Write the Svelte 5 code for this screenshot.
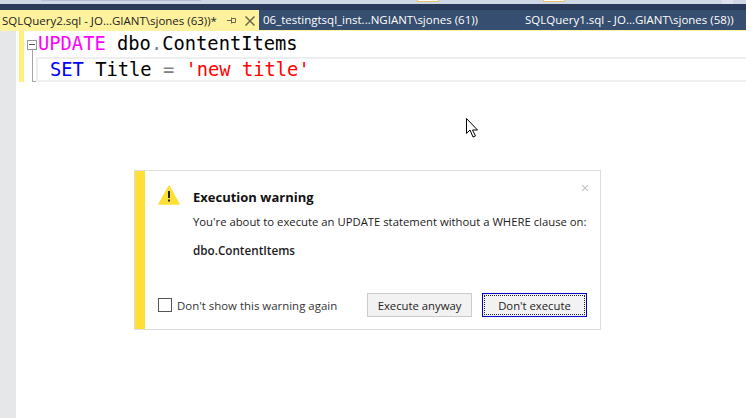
<script>
	let dontShow = $state(false);
	let tabs = [
		{ label: "SQLQuery2.sql - JO...GIANT\\sjones (63))*", active: true },
		{ label: "06_testingtsql_inst...NGIANT\\sjones (61))" },
		{ label: "SQLQuery1.sql - JO...GIANT\\sjones (58))" }
	];
</script>

<div class="ide">
	<div class="menu-strip">
		<span class="band"></span>
		<span class="chip one"></span>
		<span class="chip two"></span>
		<span class="end"></span>
	</div>
	<div class="tabs">
		{#each tabs as tab}
			<div class="tab" class:active={tab.active}>
				<span>{tab.label}</span>
				{#if tab.active}
					<svg class="pin" width="9" height="9" viewBox="0 0 9 9">
						<path d="M0 4.500h4M4.500 1.500v6M4.500 2.500h4v4h-4" fill="none" stroke="#6b6650" />
					</svg>
					<svg class="close" width="10" height="10" viewBox="0 0 10 10">
						<path d="M.5.500l9 9M9.500.500l-9 9" fill="none" stroke="#6b6650" stroke-width="1.500" />
					</svg>
				{/if}
			</div>
		{/each}
	</div>

	<div class="body">
		<div class="gutter"></div>
		<div class="doc">
			<div class="code">
				<div class="marks"></div>
				<div class="fold">
					<div class="fold-box"></div>
					<div class="fold-line"></div>
				</div>
				<div class="lines">
					<div class="line"><span class="pink">UPDATE</span> dbo<span class="grey">.</span>ContentItems</div>
					<div class="line current"><span class="blue">SET</span> Title <span class="grey">=</span> <span class="red">'new title'</span></div>
				</div>
			</div>

			<svg class="cursor" width="14" height="22" viewBox="0 0 14 22">
				<path d="M.5.500v15l3.500-3.500 3 7 2.500-1-3-6h5z" fill="#fff" stroke="#000" />
			</svg>

			<div class="dialog">
				<div class="stripe"></div>
				<div class="content">
					<button class="dismiss" aria-label="Dismiss">
						<svg width="6" height="6" viewBox="0 0 6 6">
							<path d="M0 0l6 6M6 0l-6 6" stroke="#c4c4c4" stroke-width="1.200" fill="none" />
						</svg>
					</button>
					<div class="head">
						<svg class="warn" width="22" height="20" viewBox="0 0 22 20">
							<path d="M11 1L21 19H1z" fill="#ffdf33" stroke="#ffdf33" stroke-linejoin="round" stroke-width="1.500" />
							<rect x="10" y="6" width="2" height="7" fill="#222" />
							<rect x="10" y="14.500" width="2" height="2" fill="#222" />
						</svg>
						<div class="text">
							<h1>Execution warning</h1>
							<p>You're about to execute an UPDATE statement without a WHERE clause on:</p>
							<p class="target">dbo.ContentItems</p>
						</div>
					</div>
					<div class="foot">
						<label class="check">
							<input type="checkbox" bind:checked={dontShow} />
							<span>Don't show this warning again</span>
						</label>
						<button class="btn">Execute anyway</button>
						<button class="btn primary"><span>Don't execute</span></button>
					</div>
				</div>
			</div>
		</div>
	</div>
</div>

<style>
	:global(body) {
		margin: 0;
		background: #fff;
	}
	.ide {
		width: 746px;
		height: 418px;
		overflow: hidden;
		display: flex;
		flex-direction: column;
		font-family: "Open Sans", "Noto Sans", sans-serif;
		background: #fff;
	}
	.menu-strip {
		height: 4px;
		background: #cfd6e5;
		position: relative;
		flex: none;
		border-bottom: 6px solid #2a3a59;
	}
	.band {
		position: absolute;
		top: 0;
		left: 41px;
		width: 160px;
		height: 1px;
		background: #b4bdd4;
	}
	.chip {
		position: absolute;
		top: 0;
		width: 20px;
		height: 1px;
		background: #fff;
		border: 1px solid #e5c365;
		border-top: 0;
	}
	.chip.one { left: 417px; }
	.chip.two { left: 543px; }
	.end {
		position: absolute;
		top: 0;
		left: 722px;
		width: 11px;
		height: 4px;
		background: #dde2ee;
	}
	.tabs {
		height: 20px;
		flex: none;
		display: flex;
		background: #364e6f;
		border-bottom: 1px solid #fff29d;
		color: #fff;
		font-size: 11.5px;
		line-height: 20px;
	}
	.tab {
		display: flex;
		align-items: center;
		white-space: nowrap;
		flex: none;
		box-sizing: border-box;
	}
	.tab:nth-child(1) {
		width: 259px;
		padding-left: 2px;
		background: #fff29d;
		color: #222;
		height: 21px;
	}
	.tab:nth-child(2) {
		width: 260px;
		padding-left: 4px;
	}
	.tab:nth-child(3) {
		padding-left: 6px;
	}
	.pin {
		margin-left: 10px;
	}
	.close {
		margin-left: 9px;
	}
	.body {
		flex: 1;
		display: flex;
		min-height: 0;
	}
	.gutter {
		width: 16px;
		flex: none;
		background: #e6e7e8;
	}
	.doc {
		flex: 1;
		position: relative;
	}
	.code {
		display: flex;
		height: 51px;
	}
	.marks {
		width: 5px;
		margin-left: 3px;
		background: #ffee80;
	}
	.fold {
		width: 9px;
		margin-left: 3px;
		flex: none;
	}
	.fold-box {
		width: 8px;
		height: 8px;
		margin-top: 9px;
		border: 1px solid #999;
		position: relative;
	}
	.fold-box::after {
		content: "";
		position: absolute;
		left: 1px;
		top: 3px;
		width: 6px;
		height: 1px;
		background: #555;
	}
	.fold-line {
		width: 4px;
		height: 31px;
		border-left: 1px solid #a5a5a5;
		border-bottom: 1px solid #a5a5a5;
		margin-left: 5px;
	}
	.lines {
		flex: 1;
		font-family: "DejaVu Sans Mono", monospace;
		font-size: 18.75px;
		color: #000;
	}
	.line {
		height: 26px;
		line-height: 26px;
		padding-left: 2px;
		white-space: pre;
	}
	.line.current {
		border: 2px solid #eee;
		border-right: 0;
		height: 21px;
		line-height: 21px;
		padding-left: 12px;
	}
	.pink { color: #f0f; }
	.blue { color: #00f; }
	.red { color: #f00; }
	.grey { color: #808080; }
	.cursor {
		position: absolute;
		left: 450px;
		top: 87px;
	}
	.dialog {
		position: absolute;
		left: 118px;
		top: 139px;
		width: 467px;
		height: 160px;
		box-sizing: border-box;
		border: 1px solid #ddd;
		display: flex;
		background: #fff;
		color: #1b1b1b;
		font-size: 11.3px;
	}
	.stripe {
		width: 10px;
		flex: none;
		background: #ffdf33;
	}
	.content {
		flex: 1;
		position: relative;
		padding: 14px 13px 12px 13px;
		display: flex;
		flex-direction: column;
		justify-content: space-between;
	}
	.dismiss {
		position: absolute;
		top: 14px;
		right: 12px;
		border: 0;
		padding: 0;
		background: none;
		line-height: 0;
	}
	.head {
		display: flex;
		gap: 13px;
	}
	.warn { flex: none; }
	.text {
		padding-top: 3px;
	}
	h1 {
		margin: 0 0 8px;
		font-size: 13px;
		font-weight: 700;
		line-height: 18px;
		color: #111;
	}
	p {
		margin: 0 0 12px;
		line-height: 16px;
		white-space: nowrap;
	}
	.target {
		font-size: 11.7px;
		font-weight: 600;
		margin: 0;
	}
	.foot {
		display: flex;
		align-items: center;
	}
	.check {
		display: flex;
		align-items: center;
		gap: 5px;
		flex: 1;
		color: #333;
		font-size: 11.45px;
	}
	input[type="checkbox"] {
		appearance: none;
		margin: 0;
		width: 14px;
		height: 14px;
		border: 1px solid #555;
		background: #fff;
	}
	.btn {
		width: 105px;
		height: 24px;
		box-sizing: border-box;
		border: 1px solid #ccc;
		background: #f2f2f2;
		font: inherit;
		color: #222;
		padding: 0;
		margin-left: 10px;
	}
	.btn.primary {
		border: 1px solid #00c;
		padding: 1px;
	}
	.btn.primary span {
		display: flex;
		align-items: center;
		justify-content: center;
		height: 100%;
		border: 1px dotted #222;
		box-sizing: border-box;
	}
</style>
